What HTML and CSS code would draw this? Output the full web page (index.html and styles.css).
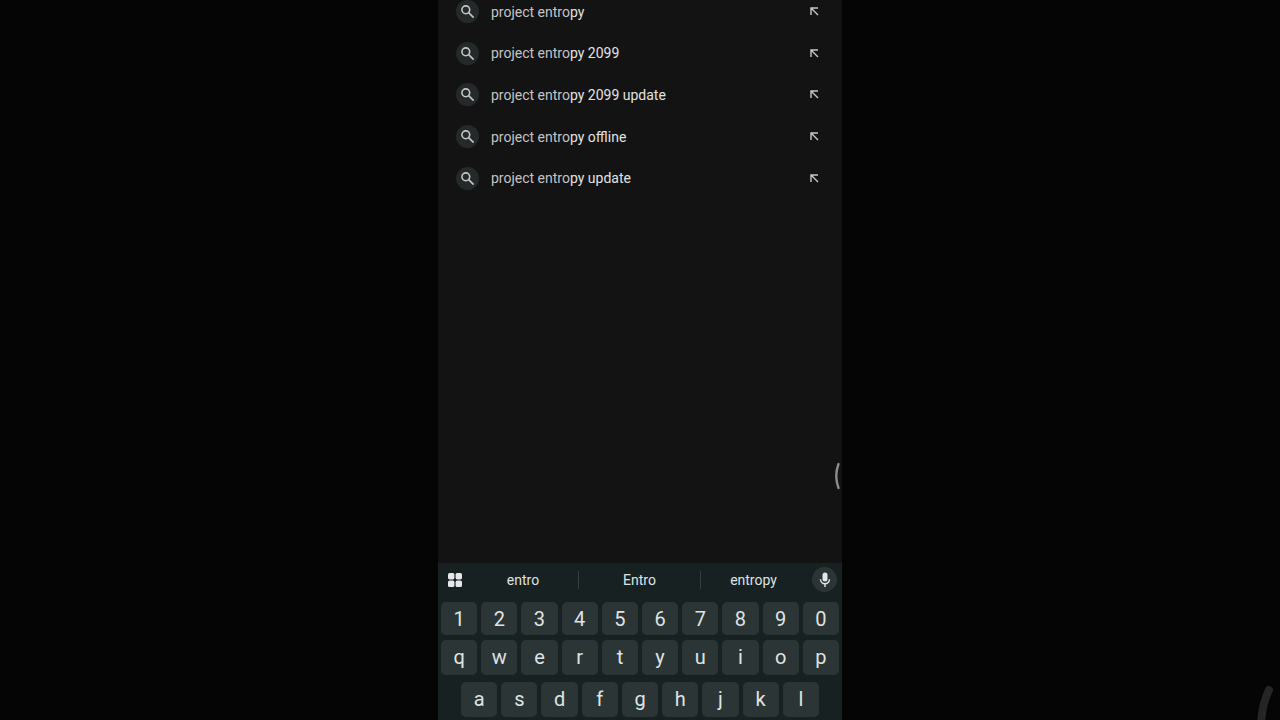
FILE: index.html
```html
<!DOCTYPE html>
<html lang="en">
<head>
  <meta charset="UTF-8" />
  <meta name="viewport" content="width=device-width, initial-scale=1" />
  <title>Search</title>
  <link rel="stylesheet" href="styles.css">
</head>
<body>

  <main class="phone">
    <ul class="results" id="results">
      <!-- Suggestions inserted by JavaScript -->
    </ul>

    <svg class="edge-handle" viewBox="0 0 8 28" aria-hidden="true"><path d="M4.5 2Q0 14 4.5 26" /></svg>

    <section class="keyboard">
      <div class="toolbar">
        <button class="tool" aria-label="Menu">
          <svg class="grid-icon" viewBox="0 0 14 14"><rect width="6.4" height="6.4" rx="1.6" /><rect x="7.6" width="6.4" height="6.4" rx="1.6" /><rect y="7.6" width="6.4" height="6.4" rx="1.6" /><rect x="7.6" y="7.6" width="6.4" height="6.4" rx="1.6" /></svg>
        </button>
        <div class="words">
          <button class="word">entro</button>
          <button class="word">Entro</button>
          <button class="word">entropy</button>
        </div>
        <button class="tool mic" aria-label="Voice input">
          <svg class="mic-icon" viewBox="0 0 16 16"><rect x="5.5" y="0.5" width="5" height="9" rx="2.5" /><path d="M3.5 7.2a4.5 4.5 0 0 0 9 0M8 11.7V15" /></svg>
        </button>
      </div>
      <div class="keys numbers" data-keys="1234567890"></div>
      <div class="keys" data-keys="qwertyuiop"></div>
      <div class="keys home" data-keys="asdfghjkl"></div>
    </section>
  </main>

  <svg class="corner-mark" viewBox="0 0 24 38" aria-hidden="true"><path d="M13 8Q6 22 5 42" /></svg>

  <script>
    // Search suggestions, split into the typed part and the completion
    const typed = "project entro";
    const completions = ["py", "py 2099", "py 2099 update", "py offline", "py update"];

    const results = document.getElementById("results");
    completions.forEach(rest => {
      const li = document.createElement("li");
      li.className = "result";
      li.innerHTML = `
        <span class="result-icon"><svg viewBox="0 0 13 13"><circle cx="4.8" cy="4.8" r="3.9" /><path d="M7.6 7.6l5 5" /></svg></span>
        <a class="result-text" href="#">${typed}<span class="rest">${rest}</span></a>
        <button class="fill" aria-label="Use ${typed}${rest}"><svg viewBox="0 0 9 9"><path d="M1 8V1H8M1 1L8 8" /></svg></button>`;
      results.appendChild(li);
    });

    // Keyboard keys
    document.querySelectorAll(".keys").forEach(row => {
      for (const letter of row.dataset.keys) {
        const key = document.createElement("button");
        key.className = "key";
        key.textContent = letter;
        row.appendChild(key);
      }
    });
  </script>

</body>
</html>
```
FILE: styles.css
```css
:root {
  --page-color: #050505;
  --screen-color: #131313;
  --keyboard-color: #182122;
  --key-color: #2c3536;
  --text-color: #dfe3e3;
}

* {
  box-sizing: border-box;
}

body {
  margin: 0;
  height: 100vh;
  overflow: hidden;
  background: var(--page-color);
  color: var(--text-color);
  font-family: Roboto, sans-serif;
}

button {
  margin: 0;
  padding: 0;
  border: none;
  background: none;
  color: inherit;
  font-family: inherit;
  cursor: pointer;
}

svg {
  display: block;
}

.phone {
  position: relative;
  display: flex;
  flex-direction: column;
  justify-content: space-between;
  width: 100%;
  max-width: 404px;
  height: 100%;
  margin: 0 auto;
  background: var(--screen-color);
}

.results {
  display: grid;
  grid-auto-rows: 1fr;
  height: 208px;
  margin: -9px 0 0;
  padding: 0 19px 0 18px;
  list-style: none;
}

.result {
  display: flex;
  align-items: center;
}

.result-icon {
  display: flex;
  align-items: center;
  justify-content: center;
  width: 23px;
  height: 23px;
  margin-right: 12px;
  border-radius: 50%;
  background: #25292a;
}

.result-icon svg {
  width: 13px;
  height: 13px;
  fill: none;
  stroke: #c3c7c7;
  stroke-width: 1.6;
}

.result-text {
  flex: 1;
  color: #c4c4c4;
  font-size: 14px;
  line-height: 20px;
  text-decoration: none;
}

.rest {
  color: #e2e2e2;
}

.fill {
  padding: 4px;
}

.fill svg {
  width: 9px;
  height: 9px;
  fill: none;
  stroke: #c8c8c8;
  stroke-width: 1.4;
}

.edge-handle {
  position: absolute;
  top: 462px;
  right: 0;
  width: 8px;
  height: 28px;
  fill: none;
  stroke: #8c8c8c;
  stroke-width: 2.4;
  stroke-linecap: round;
}

.keyboard {
  padding: 0 3px 3px;
  background: var(--keyboard-color);
}

.toolbar {
  display: flex;
  align-items: center;
  height: 33px;
  margin-bottom: 6px;
}

.tool {
  display: flex;
  align-items: center;
  justify-content: center;
  width: 27px;
  height: 25px;
}

.grid-icon {
  width: 14px;
  height: 14px;
  fill: #e4e8e8;
}

.mic {
  width: 25px;
  margin-right: 2px;
  border-radius: 50%;
  background: var(--key-color);
}

.mic-icon {
  width: 16px;
  height: 16px;
  fill: #e4e8e8;
}

.mic-icon path {
  fill: none;
  stroke: #e4e8e8;
  stroke-width: 1.4;
}

.words {
  display: grid;
  grid-template-columns: 110fr 122fr 106fr;
  flex: 1;
  margin-right: 6px;
}

.word {
  height: 18px;
  font-size: 14px;
  line-height: 18px;
}

.word + .word {
  border-left: 1px solid #344041;
}

.keys {
  display: grid;
  grid-template-columns: repeat(10, 1fr);
  gap: 4px;
  margin-bottom: 7px;
}

.home {
  grid-template-columns: repeat(9, 1fr);
  margin-bottom: 0;
  padding: 0 20px;
}

.key {
  height: 35px;
  padding-bottom: 2px;
  border-radius: 5px;
  background: var(--key-color);
  font-size: 20px;
  line-height: 24px;
}

.numbers {
  margin-bottom: 5px;
}

.numbers .key {
  height: 33px;
  padding-bottom: 0;
}

.corner-mark {
  position: absolute;
  right: 0;
  bottom: 0;
  width: 24px;
  height: 38px;
  fill: none;
  stroke: #252525;
  stroke-width: 8;
  stroke-linecap: round;
}
```
